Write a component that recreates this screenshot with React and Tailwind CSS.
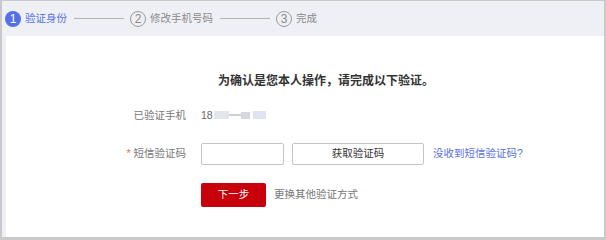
import React from 'react';

const steps = [
    { n: 1, label: '验证身份', active: true },
    { n: 2, label: '修改手机号码' },
    { n: 3, label: '完成' },
];

export default function App() {
    return (
        <div className="w-[606px] h-[240px] flex flex-col bg-[#eef0f6] border-l-2 border-r-2 border-t border-b-[3px] border-[#c9c9c9] font-['Liberation_Sans','Noto_Sans_CJK_SC',sans-serif] overflow-hidden">
            {/* Steps */}
            <div className="h-[35px] flex items-center pl-[3px] shrink-0">
                {steps.map((s, i) => (
                    <div key={s.n} className="flex items-center">
                        <span
                            className={`w-[16px] h-[16px] rounded-full flex items-center justify-center text-[12px] leading-none ${s.active ? 'bg-[#5470e6] text-white' : 'border border-[#9a9a9a] text-[#8a8a8a]'
                                }`}
                        >
                            {s.n}
                        </span>
                        <span className={`ml-[4px] text-[10.5px] ${s.active ? 'text-[#5470e6]' : 'text-[#8a8a8a]'}`}>
                            {s.label}
                        </span>
                        {i < steps.length - 1 && <span className="ml-[7px] mr-[6px] w-[50px] h-px bg-[#b4b4b4]" />}
                    </div>
                ))}
            </div>

            {/* Panel */}
            <div className="flex-1 ml-[4px] bg-white">
                <p className="pt-[37px] pl-[212px] text-[12px] font-bold text-[#333] leading-[16px]">
                    为确认是您本人操作，请完成以下验证。
                </p>

                <div className="mt-[19px] flex items-center text-[10.5px] leading-[14px]">
                    <span className="w-[180px] text-right text-[#777]">已验证手机</span>
                    <span className="ml-[15px] flex items-center text-[#666]">
                        18
                        <span className="ml-[1px] w-[15px] h-[8px] bg-[#e4e6ee]" />
                        <span className="w-[12px] h-[2px] bg-[#cdd0da]" />
                        <span className="w-[9px] h-[7px] bg-[#d6d8e0]" />
                        <span className="ml-[3px] w-[13px] h-[8px] bg-[#dde3f0]" />
                    </span>
                </div>

                <div className="mt-[21px] flex items-center text-[10.5px]">
                    <span className="w-[180px] text-right text-[#777]">
                        <span className="text-[#e36b6b] mr-[3px]">*</span>短信验证码
                    </span>
                    <input
                        type="text"
                        className="ml-[15px] w-[83px] h-[22px] border border-[#c4c4c4] rounded-[2px] outline-none"
                    />
                    <button className="ml-[8px] w-[132px] h-[22px] border border-[#c4c4c4] rounded-[2px] bg-white text-[#333] text-[10.5px]">
                        获取验证码
                    </button>
                    <span className="ml-[9px] text-[#5a72e0]">没收到短信验证码?</span>
                </div>

                <div className="mt-[18px] flex items-center text-[10.5px]">
                    <button className="ml-[195px] w-[65px] h-[24px] rounded-[2px] bg-[#c7000b] text-white text-[10.5px]">
                        下一步
                    </button>
                    <span className="ml-[8px] text-[#777]">更换其他验证方式</span>
                </div>
            </div>
        </div>
    );
}
